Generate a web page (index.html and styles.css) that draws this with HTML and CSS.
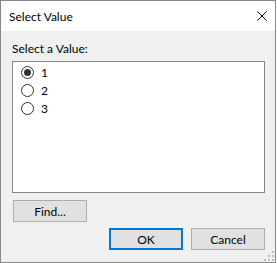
FILE: index.html
```html
<!DOCTYPE html>
<html lang="en">
<head>
    <meta charset="UTF-8">
    <title>Select Value</title>
    <link rel="stylesheet" href="styles.css">
</head>
<body>
    <div class="dialog">
        <div class="titlebar">
            <span class="title">Select Value</span>
            <svg class="close" width="10" height="10" viewBox="0 0 10 10">
                <path d="M0.5 0.5 L9.5 9.5 M9.5 0.5 L0.5 9.5" stroke="#000" stroke-width="1" fill="none"/>
            </svg>
        </div>
        <div class="content">
            <label class="caption">Select a Value:</label>
            <div class="listbox">
                <label class="option"><input type="radio" name="value" checked><span>1</span></label>
                <label class="option"><input type="radio" name="value"><span>2</span></label>
                <label class="option"><input type="radio" name="value"><span>3</span></label>
            </div>
            <button class="btn find">Find...</button>
            <div class="actions">
                <button class="btn default">OK</button>
                <button class="btn">Cancel</button>
            </div>
        </div>
        <svg class="grip" width="11" height="11" viewBox="0 0 11 11">
            <rect x="8" y="0" width="2" height="2" fill="#bcbcbc"/>
            <rect x="4" y="4" width="2" height="2" fill="#bcbcbc"/>
            <rect x="8" y="4" width="2" height="2" fill="#bcbcbc"/>
            <rect x="0" y="8" width="2" height="2" fill="#bcbcbc"/>
            <rect x="4" y="8" width="2" height="2" fill="#bcbcbc"/>
            <rect x="8" y="8" width="2" height="2" fill="#bcbcbc"/>
        </svg>
    </div>
</body>
</html>
```

FILE: styles.css
```css
html, body {
    margin: 0;
    background: #ffffff;
}
body {
    font-family: 'Segoe UI', Lato, 'Noto Sans', sans-serif;
    font-size: 12px;
    color: #000;
}
.dialog {
    position: relative;
    width: 276px;
    height: 263px;
    box-sizing: border-box;
    border: 1px solid #888888;
    display: flex;
    flex-direction: column;
    background: #f0f0f0;
}
.titlebar {
    height: 30px;
    background: #ffffff;
    display: flex;
    align-items: center;
    justify-content: space-between;
    padding: 0 8px;
}
.title {
    line-height: 15px;
}
.content {
    flex: 1;
    padding: 10px 10px 0 11px;
    display: flex;
    flex-direction: column;
}
.caption {
    line-height: 15px;
    margin-bottom: 5px;
}
.listbox {
    height: 132px;
    box-sizing: border-box;
    border: 1px solid #828790;
    background: #ffffff;
    padding: 2px 0 0 8px;
}
.option {
    display: flex;
    align-items: flex-start;
    height: 18px;
    line-height: 18px;
    color: #000;
}
.option input {
    appearance: none;
    -webkit-appearance: none;
    width: 13px;
    height: 13px;
    margin: 2px 7px 0 0;
    border: 1px solid #333333;
    border-radius: 50%;
    box-sizing: border-box;
    background: #ffffff;
    display: flex;
    align-items: center;
    justify-content: center;
    outline: none;
}
.option input:checked::after {
    content: "";
    width: 7px;
    height: 7px;
    border-radius: 50%;
    background: #333333;
}
.btn {
    font-family: inherit;
    font-size: 12px;
    width: 74px;
    height: 22px;
    padding: 0;
    background: #e1e1e1;
    border: 1px solid #adadad;
    color: #000;
    box-sizing: border-box;
}
.find {
    margin: 7px 0 0 1px;
}
.actions {
    display: flex;
    justify-content: flex-end;
    gap: 8px;
    margin-top: 6px;
}
.default {
    border: 2px solid #0078d7;
}
.grip {
    position: absolute;
    right: 0;
    bottom: 0;
}
```
